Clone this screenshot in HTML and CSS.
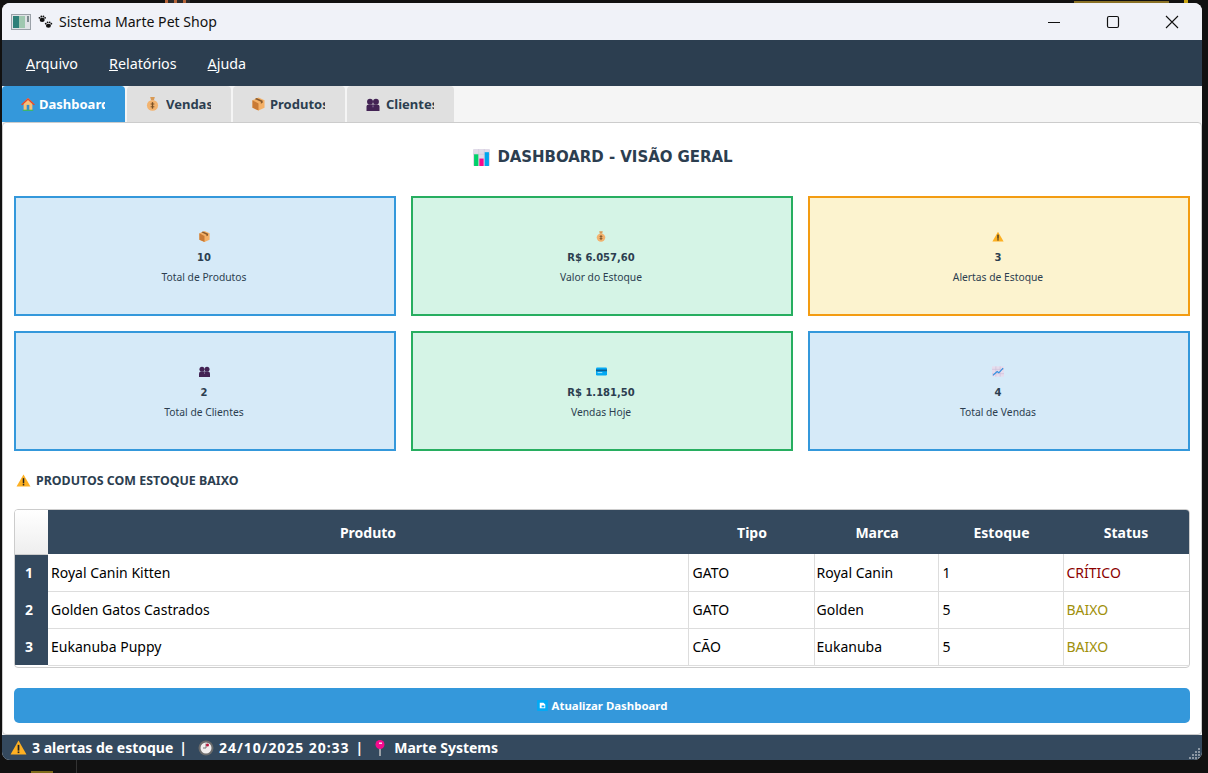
FILE: index.html
```html
<!DOCTYPE html>
<html lang="pt-BR">
<head>
<meta charset="utf-8">
<title>Sistema Marte Pet Shop</title>
<link rel="stylesheet" href="styles.css">
</head>
<body>
<svg class="defs" width="0" height="0" aria-hidden="true">
  <symbol id="box" viewBox="1 1 14 14"><path d="M8 1l6.500 3v8L8 15l-6.500-3V4z" fill="#f4b066"/><path d="M8 7.500V15l-6.500-3V4z" fill="#c97a35"/><path d="M4 2.600l6.500 3.100v2l2-1V4.500L6 1.600z" fill="#8a5a2c"/></symbol>
  <symbol id="bag" viewBox="1 1 14 15"><path d="M5.500 1h5L9.500 4.500h-3z" fill="#d99a55"/><ellipse cx="8" cy="10" rx="6" ry="5.800" fill="#f2b36f"/><rect x="7.300" y="6.500" width="1.400" height="7" fill="#7a5228"/><rect x="6" y="8" width="4" height="1" fill="#7a5228"/><rect x="6" y="11" width="4" height="1" fill="#7a5228"/></symbol>
  <symbol id="warn" viewBox="0 1 16 14"><path d="M8 1.500L15.500 14.500H.5z" fill="#fdb022"/><rect x="7.200" y="5.500" width="1.600" height="5.500" fill="#222"/><rect x="7.200" y="11.700" width="1.600" height="1.600" fill="#222"/></symbol>
  <symbol id="people" viewBox="1 1 14 14"><circle cx="4.800" cy="5" r="3.200" fill="#432354"/><circle cx="11.200" cy="5" r="3.200" fill="#432354"/><path d="M1 15v-4.500Q1 8 4 8h8q3 0 3 2.500V15z" fill="#432354"/><rect x="7.600" y="9" width=".8" height="2" fill="#a58fb8"/></symbol>
  <symbol id="card" viewBox="1 3 14 10"><rect x="1" y="3" width="14" height="10" rx="1.500" fill="#03a9f4"/><rect x="1" y="5.500" width="14" height="2.200" fill="#0b5f96"/><rect x="3" y="9" width="6" height="1" fill="#cdefff"/></symbol>
  <symbol id="trend" viewBox="1 2 14 12"><rect x="1" y="2" width="14" height="12" fill="#e6dcec"/><path d="M1 5.500h14M1 10.500h14M5.500 2v12M10.500 2v12" stroke="#cfc0da" stroke-width=".8"/><path d="M2 12.500L7 8l2 1.500 5-5.500" stroke="#2f8fe0" stroke-width="1.400" fill="none"/></symbol>
  <symbol id="bars" viewBox="0 0 16 16"><rect width="16" height="16" rx="1" fill="#e1dbe8"/><path d="M5.300 0v16M10.600 0v16M0 5h16" stroke="#cfc7da" stroke-width=".6"/><rect x="1" y="5" width="4" height="11" fill="#00d26a"/><rect x="6" y="9" width="4" height="7" fill="#f70a8d"/><rect x="11" y="3" width="4" height="13" fill="#00a6ed"/></symbol>
  <symbol id="house" viewBox="0 0 16 16"><path d="M8 1L1 8h2v7h10V8h2z" fill="#f8c078"/><path d="M8 1L0 8.500l1.500 1L8 3.500l6.500 6 1.500-1z" fill="#e0492f"/><rect x="6.500" y="9" width="3" height="6" fill="#2f8fd0"/><rect x="2" y="14.500" width="12" height="1.500" fill="#3fb56b"/></symbol>
  <symbol id="paws" viewBox="0 0 18 16"><g fill="#111"><ellipse cx="5" cy="5.500" rx="3" ry="2.500"/><circle cx="1.800" cy="3" r="1.100"/><circle cx="4" cy="1.400" r="1.100"/><circle cx="6.500" cy="1.400" r="1.100"/><circle cx="8.500" cy="3" r="1.100"/><ellipse cx="12.500" cy="12.500" rx="3" ry="2.500"/><circle cx="9.300" cy="10" r="1.100"/><circle cx="11.500" cy="8.400" r="1.100"/><circle cx="14" cy="8.400" r="1.100"/><circle cx="16" cy="10" r="1.100"/></g></symbol>
  <symbol id="refresh" viewBox="0 0 12 12"><rect width="12" height="12" rx="1" fill="#03a9f4"/><path d="M3 3h4l2 2v4H3z" fill="#fff"/><path d="M5 6h3v2H5z" fill="#03a9f4"/></symbol>
  <symbol id="clock" viewBox="0 0 16 16"><circle cx="8" cy="8" r="7.500" fill="#6b6b6b"/><circle cx="8" cy="8" r="5.500" fill="#f1eeee"/><path d="M8 3.500V8H5" stroke="#777" fill="none"/><circle cx="9.500" cy="5" r="1.500" fill="#b8183e"/></symbol>
  <symbol id="pin" viewBox="0 0 12 16"><rect x="5" y="7" width="2" height="9" fill="#9aa0a6"/><circle cx="6" cy="4.500" r="4.500" fill="#f70a8d"/><rect x="5" y="2.500" width="3" height="1.500" fill="#ffd0ea"/></symbol>
</svg>

<div class="desk desk-orange"></div>
<div class="desk desk-gold"></div>
<div class="desk desk-gold-b"></div>
<div class="desk desk-line"></div>
<div class="desk desk-mark"></div>

<div class="window">
  <header class="titlebar">
    <svg class="app-icon" width="20" height="16" viewBox="0 0 20 16"><rect x=".5" y=".5" width="19" height="15" fill="#dfe3e6" stroke="#9aa1a8"/><rect x="2" y="2" width="6" height="12" fill="#2e7f78"/><rect x="8" y="2" width="6" height="12" fill="#9fc8b0"/><rect x="16" y="2" width="2" height="6" fill="#7d8a8f"/></svg>
    <svg class="paws" width="15" height="14"><use href="#paws"/></svg>
    <span class="title">Sistema Marte Pet Shop</span>
    <div class="win-controls">
      <svg width="14" height="14" viewBox="0 0 14 14"><path d="M1 7.500h12" stroke="#111" stroke-width="1"/></svg>
      <svg width="14" height="14" viewBox="0 0 14 14"><rect x="1.500" y="1.500" width="11" height="11" rx="1.500" fill="none" stroke="#111" stroke-width="1.200"/></svg>
      <svg width="14" height="14" viewBox="0 0 14 14"><path d="M1 1l12 12M13 1L1 13" stroke="#111" stroke-width="1.100"/></svg>
    </div>
  </header>

  <nav class="menubar">
    <span><u>A</u>rquivo</span>
    <span><u>R</u>elatórios</span>
    <span><u>A</u>juda</span>
  </nav>

  <div class="tabs">
    <div class="tab active tab-dash"><svg width="14" height="14"><use href="#house"/></svg><span class="tab-label">Dashboard</span></div>
    <div class="tab tab-vendas"><svg width="13" height="14"><use href="#bag"/></svg><span class="tab-label">Vendas</span></div>
    <div class="tab tab-prod"><svg width="13" height="14"><use href="#box"/></svg><span class="tab-label">Produtos</span></div>
    <div class="tab tab-cli"><svg width="14" height="13"><use href="#people"/></svg><span class="tab-label">Clientes</span></div>
  </div>

  <main class="pane">
    <h1 class="heading"><svg width="17" height="17"><use href="#bars"/></svg>DASHBOARD - VISÃO GERAL</h1>

    <section class="cards">
      <div class="card blue"><svg width="11" height="11"><use href="#box"/></svg><b>10</b><span>Total de Produtos</span></div>
      <div class="card green"><svg width="10" height="11"><use href="#bag"/></svg><b>R$ 6.057,60</b><span>Valor do Estoque</span></div>
      <div class="card yellow"><svg width="12" height="11"><use href="#warn"/></svg><b>3</b><span>Alertas de Estoque</span></div>
      <div class="card blue"><svg width="11" height="11"><use href="#people"/></svg><b>2</b><span>Total de Clientes</span></div>
      <div class="card green"><svg width="11" height="11"><use href="#card"/></svg><b>R$ 1.181,50</b><span>Vendas Hoje</span></div>
      <div class="card blue"><svg width="12" height="11"><use href="#trend"/></svg><b>4</b><span>Total de Vendas</span></div>
    </section>

    <h2 class="subheading"><svg width="15" height="13"><use href="#warn"/></svg>PRODUTOS COM ESTOQUE BAIXO</h2>

    <div class="table-wrap">
      <table class="stock">
        <colgroup><col class="c0"><col class="c1"><col class="c2"><col class="c3"><col class="c4"><col class="c5"></colgroup>
        <thead><tr><th class="corner"></th><th>Produto</th><th>Tipo</th><th>Marca</th><th>Estoque</th><th>Status</th></tr></thead>
        <tbody>
          <tr><th>1</th><td>Royal Canin Kitten</td><td>GATO</td><td>Royal Canin</td><td>1</td><td class="critical">CRÍTICO</td></tr>
          <tr><th>2</th><td>Golden Gatos Castrados</td><td>GATO</td><td>Golden</td><td>5</td><td class="low">BAIXO</td></tr>
          <tr><th>3</th><td>Eukanuba Puppy</td><td>CÃO</td><td>Eukanuba</td><td>5</td><td class="low">BAIXO</td></tr>
        </tbody>
      </table>
    </div>

    <button class="refresh" type="button"><svg width="11" height="11"><use href="#refresh"/></svg>Atualizar Dashboard</button>
  </main>

  <footer class="statusbar">
    <svg class="st-warn" width="17" height="15"><use href="#warn"/></svg><span>3 alertas de estoque</span><span class="sep">|</span>
    <svg class="st-clock" width="16" height="16"><use href="#clock"/></svg><span class="st-date">24/10/2025 20:33</span><span class="sep">|</span>
    <svg class="st-pin" width="12" height="16"><use href="#pin"/></svg><span>Marte Systems</span>
    <svg class="grip" width="12" height="12" viewBox="0 0 12 12"><g fill="#8b97a3"><rect x="9" y="1" width="2" height="2"/><rect x="6" y="4" width="2" height="2"/><rect x="9" y="4" width="2" height="2"/><rect x="3" y="7" width="2" height="2"/><rect x="6" y="7" width="2" height="2"/><rect x="9" y="7" width="2" height="2"/><rect x="0" y="10" width="2" height="2"/><rect x="3" y="10" width="2" height="2"/><rect x="6" y="10" width="2" height="2"/><rect x="9" y="10" width="2" height="2"/></g></svg>
  </footer>
</div>
</body>
</html>
```

FILE: styles.css
```css
* { box-sizing: border-box; }
html, body { margin: 0; height: 100%; }
body {
  background: #111;
  padding: 3px 6px 13px 2px;
  font-family: "Noto Sans", "Open Sans", sans-serif;
  overflow: hidden;
}
.defs { position: absolute; }
.desk { position: absolute; }
.desk-orange { left: 165px; top: 0; width: 25px; height: 3px; background: repeating-linear-gradient(90deg, #b5643a 0 3px, #2a2a2a 3px 9px); }
.desk-gold { left: 1074px; top: 1px; width: 95px; height: 2px; background: #8a7226; }
.desk-gold-b { left: 1184px; top: 0; width: 4px; height: 3px; background: #c9a514; }
.desk-line { left: 76px; top: 760px; width: 1px; height: 13px; background: #333; }
.desk-mark { left: 31px; top: 771px; width: 22px; height: 2px; background: #7d6a1a; }
.window {
  position: relative;
  width: 1200px;
  height: 757px;
  display: flex;
  flex-direction: column;
  background: #f5f5f5;
  border-radius: 8px;
  overflow: hidden;
}
.titlebar {
  height: 37px;
  flex: none;
  display: flex;
  align-items: center;
  padding-left: 9px;
  background: #f0f2f8;
  color: #111;
}
.app-icon { margin-right: 7px; }
.paws { margin-right: 6px; }
.title { font-size: 14.100px; }
.win-controls {
  margin-left: auto;
  display: flex;
  gap: 45px;
  padding-right: 23px;
}
.menubar {
  height: 46px;
  flex: none;
  display: flex;
  align-items: center;
  gap: 31px;
  padding-left: 24px;
  background: #2c3e50;
  color: #fff;
  font-size: 14.300px;
}
.tabs {
  height: 36px;
  flex: none;
  display: flex;
  gap: 2px;
}
.tab {
  display: flex;
  align-items: center;
  padding-left: 19px;
  border-radius: 4px 4px 0 0;
  background: #e0e0e0;
  color: #2c3e50;
  font-size: 13px;
  font-weight: 700;
}
.tab.active { background: #3498db; color: #fff; }
.tab-label { overflow: hidden; white-space: nowrap; }
.tab-dash { width: 123px; }
.tab-dash .tab-label { width: 66px; margin-left: 4px; }
.tab-vendas { width: 104px; }
.tab-vendas .tab-label { width: 45px; margin-left: 7px; }
.tab-prod { width: 112px; }
.tab-prod .tab-label { width: 55px; margin-left: 5px; }
.tab-cli { width: 107px; }
.tab-cli .tab-label { width: 48px; margin-left: 6px; }
.pane {
  height: 613px;
  flex: none;
  display: flex;
  flex-direction: column;
  padding: 0 11px;
  background: #fff;
  border: 1px solid #ccc;
  border-radius: 4px;
}
.heading {
  margin: 24px 0 0;
  height: 20px;
  display: flex;
  align-items: center;
  justify-content: center;
  gap: 7px;
  padding-left: 2px;
  color: #2c3e50;
  font-family: "DejaVu Sans", sans-serif;
  font-size: 15px;
  letter-spacing: -.05px;
  font-weight: 700;
}
.cards {
  margin-top: 29px;
  display: grid;
  grid-template-columns: repeat(3, 382px);
  grid-auto-rows: 120px;
  gap: 15px;
}
.card {
  display: flex;
  flex-direction: column;
  align-items: center;
  justify-content: center;
  padding: 3px 2px 0 0;
  border: 2px solid;
  color: #2c3e50;
  font-size: 10.300px;
}
.card svg { margin-bottom: 9px; }
.card b {
  font-family: "DejaVu Sans", sans-serif;
  font-size: 10px;
  line-height: 14px;
  margin-bottom: 5px;
}
.card span { line-height: 15px; }
.blue { border-color: #3498db; background: #d6eaf8; }
.green { border-color: #27ae60; background: #d5f4e6; }
.yellow { border-color: #f39c12; background: #fcf3cf; }
.subheading {
  margin: 21px 0 0;
  height: 16px;
  display: flex;
  align-items: center;
  gap: 5px;
  padding-left: 2px;
  color: #2c3e50;
  font-size: 12.400px;
  font-weight: 700;
}
.table-wrap {
  margin-top: 21px;
  height: 159px;
  border: 1px solid #ccc;
  border-radius: 4px;
  overflow: hidden;
}
.stock {
  width: 1174px;
  table-layout: fixed;
  border-collapse: collapse;
  font-size: 14px;
}
.c0 { width: 33px; }
.c1 { width: 640px; }
.c2 { width: 126px; }
.c3 { width: 124px; }
.c4 { width: 125px; }
.c5 { width: 126px; }
.stock thead th {
  height: 44px;
  background: #34495e;
  color: #fff;
  font-weight: 700;
  padding: 0;
}
.stock thead th:nth-child(n+3):nth-child(-n+5) { padding-left: 2px; }
.stock thead .corner { background: linear-gradient(#fff, #eee); border-bottom: 1px solid #ccc; }
.stock tbody th {
  height: 37px;
  padding: 0 5px 0 0;
  background: #34495e;
  color: #fff;
  font-weight: 700;
}
.stock td {
  padding: 0 3px;
  color: #000;
  border-bottom: 1px solid #ddd;
  border-right: 1px solid #ddd;
}
.stock td:nth-child(3), .stock td:nth-child(5) { padding-left: 4px; }
.stock td:nth-child(4) { padding-left: 2px; }
.stock td.critical { color: #8b0000; }
.stock td.low { color: #a0900a; }
.refresh {
  margin-top: 20px;
  height: 35px;
  width: 1176px;
  flex: none;
  display: flex;
  align-items: center;
  justify-content: center;
  gap: 4px;
  border: 0;
  border-radius: 5px;
  background: #3498db;
  color: #fff;
  font-family: "Noto Sans", sans-serif;
  font-size: 11.400px;
  font-weight: 700;
}
.statusbar {
  position: relative;
  height: 25px;
  flex: none;
  display: flex;
  align-items: center;
  padding-left: 8px;
  background: #34495e;
  color: #fff;
  font-size: 14px;
  font-weight: 700;
}
.st-warn { margin-right: 5px; }
.st-clock { margin: 0 5px 0 11px; }
.st-pin { margin: 0 8px 0 11px; }
.st-date { letter-spacing: .95px; }
.sep { margin-left: 6px; }
.grip { position: absolute; right: 1px; bottom: 1px; }
```
